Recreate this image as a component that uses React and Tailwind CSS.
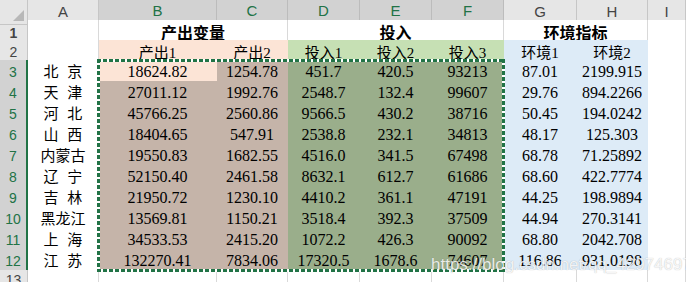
const GRID = 'grid grid-cols-[28px_71px_118px_71px_72px_72px_72px_73px_71px_1fr]';
const CJK = "font-['Liberation_Serif','Noto_Sans_CJK_SC',serif]";

const PEACH = 'bg-[#fce4d6] border-[#fce4d6]';
const PEACH_SEL = 'bg-[#c5b4a9] border-[#c5b4a9]';
const GREEN = 'bg-[#c6e0b4] border-[#c6e0b4]';
const GREEN_SEL = 'bg-[#9aae8b] border-[#9aae8b]';
const BLUE = 'bg-[#ddebf7] border-[#ddebf7]';
const PLAIN = 'bg-white border-[#d9d9d9]';

const ROWS = [
  ['北 京', '18624.82', '1254.78', '451.7', '420.5', '93213', '87.01', '2199.915'],
  ['天 津', '27011.12', '1992.76', '2548.7', '132.4', '99607', '29.76', '894.2266'],
  ['河 北', '45766.25', '2560.86', '9566.5', '430.2', '38716', '50.45', '194.0242'],
  ['山 西', '18404.65', '547.91', '2538.8', '232.1', '34813', '48.17', '125.303'],
  ['内蒙古', '19550.83', '1682.55', '4516.0', '341.5', '67498', '68.78', '71.25892'],
  ['辽 宁', '52150.40', '2461.58', '8632.1', '612.7', '61686', '68.60', '422.7774'],
  ['吉 林', '21950.72', '1230.10', '4410.2', '361.1', '47191', '44.25', '198.9894'],
  ['黑龙江', '13569.81', '1150.21', '3518.4', '392.3', '37509', '44.94', '270.3141'],
  ['上 海', '34533.53', '2415.20', '1072.2', '426.3', '90092', '68.80', '2042.708'],
  ['江 苏', '132270.41', '7834.06', '17320.5', '1678.6', '74607', '116.86', '931.0198'],
];

const LETTERS = ['A', 'B', 'C', 'D', 'E', 'F', 'G', 'H', 'I'];

function RowHead({ n, selected }) {
  return (
    <div
      className={
        'flex items-center justify-center border-b text-[14px] font-["Liberation_Sans",sans-serif] ' +
        (selected
          ? 'bg-[#d2d2d2] text-[#217346] border-[#bcbcbc] border-r-2 border-r-[#217346]'
          : 'bg-[#e6e6e6] text-[#444] border-[#c6c6c6] border-r')
      }
    >
      {n}
    </div>
  );
}

function Cell({ tone = PLAIN, className = '', children }) {
  return (
    <div className={`flex items-center justify-center border-r border-b text-black ${tone} ${className}`}>
      {children}
    </div>
  );
}

export default function App() {
  return (
    <div className="relative w-[686px] h-[282px] overflow-hidden bg-white select-none">
      {/* column headers */}
      <div className={`${GRID} h-[20px]`}>
        <div className="relative bg-[#e6e6e6] border-r border-b border-[#c6c6c6]">
          <svg className="absolute right-[3px] bottom-[3px]" width="11" height="11" viewBox="0 0 11 11">
            <polygon points="11,0 11,11 0,11" fill="#b8b8b8" />
          </svg>
        </div>
        {LETTERS.map((l, i) => {
          const sel = i >= 1 && i <= 5;
          return (
            <div
              key={l}
              className={
                'flex items-center justify-center border-r text-[15px] font-["Liberation_Sans",sans-serif] ' +
                (sel
                  ? 'bg-[#d2d2d2] text-[#217346] border-[#bcbcbc] border-b-2 border-b-[#217346]'
                  : 'bg-[#e6e6e6] text-[#444] border-[#c6c6c6] border-b')
              }
            >
              {l}
            </div>
          );
        })}
      </div>

      {/* row 1 */}
      <div className={`${GRID} h-[20px] text-[16px] font-bold ${CJK}`}>
        <RowHead n={1} />
        <Cell />
        <Cell className="col-span-2 pt-[2px]">产出变量</Cell>
        <Cell className="col-span-3 pt-[2px]">投入</Cell>
        <Cell className="col-span-2 pt-[2px]">环境指标</Cell>
        <Cell />
      </div>

      {/* row 2 */}
      <div className={`${GRID} h-[20px] text-[15px] ${CJK}`}>
        <RowHead n={2} />
        <Cell />
        <Cell tone={PEACH} className="pt-[2px]">产出1</Cell>
        <Cell tone={PEACH} className="pt-[2px]">产出2</Cell>
        <Cell tone={GREEN} className="pt-[2px]">投入1</Cell>
        <Cell tone={GREEN} className="pt-[2px]">投入2</Cell>
        <Cell tone={GREEN} className="pt-[2px]">投入3</Cell>
        <Cell tone={BLUE} className="pt-[2px]">环境1</Cell>
        <Cell tone={BLUE} className="pt-[2px]">环境2</Cell>
        <Cell />
      </div>

      {/* data rows */}
      {ROWS.map((r, idx) => (
        <div key={idx} className={`${GRID} h-[21px] text-[16px] ${CJK}`}>
          <RowHead n={idx + 3} selected />
          <Cell className="text-[15px] whitespace-pre [word-spacing:5px]">{r[0]}</Cell>
          <Cell tone={idx === 0 ? PEACH : PEACH_SEL}>{r[1]}</Cell>
          <Cell tone={PEACH_SEL}>{r[2]}</Cell>
          <Cell tone={GREEN_SEL}>{r[3]}</Cell>
          <Cell tone={GREEN_SEL}>{r[4]}</Cell>
          <Cell tone={GREEN_SEL}>{r[5]}</Cell>
          <Cell tone={BLUE}>{r[6]}</Cell>
          <Cell tone={BLUE}>{r[7]}</Cell>
          <Cell />
        </div>
      ))}

      {/* row 13 */}
      <div className={`${GRID} h-[20px]`}>
        <RowHead n={13} />
        {LETTERS.map((l) => (
          <Cell key={l} />
        ))}
      </div>

      {/* copy selection (marching ants) */}
      <div className="absolute left-[97px] top-[59px] w-[408px] h-[213px] pointer-events-none">
        <div className="absolute left-0 right-0 top-0 h-[3px] bg-[repeating-linear-gradient(90deg,#217346_0_4px,#fff_4px_6px)]" />
        <div className="absolute left-0 right-0 bottom-0 h-[3px] bg-[repeating-linear-gradient(90deg,#217346_0_4px,#fff_4px_6px)]" />
        <div className="absolute top-0 bottom-0 left-0 w-[3px] bg-[repeating-linear-gradient(180deg,#217346_0_4px,#fff_4px_6px)]" />
        <div className="absolute top-0 bottom-0 right-0 w-[3px] bg-[repeating-linear-gradient(180deg,#217346_0_4px,#fff_4px_6px)]" />
      </div>

      {/* watermark */}
      <div className="absolute left-[431px] top-[252px] text-[17px] text-white/85 font-['Liberation_Sans',sans-serif] [text-shadow:0_0_1px_rgba(0,0,0,0.3)] pointer-events-none">
        https://blog.csdn.net/qq_42974697
      </div>
    </div>
  );
}
